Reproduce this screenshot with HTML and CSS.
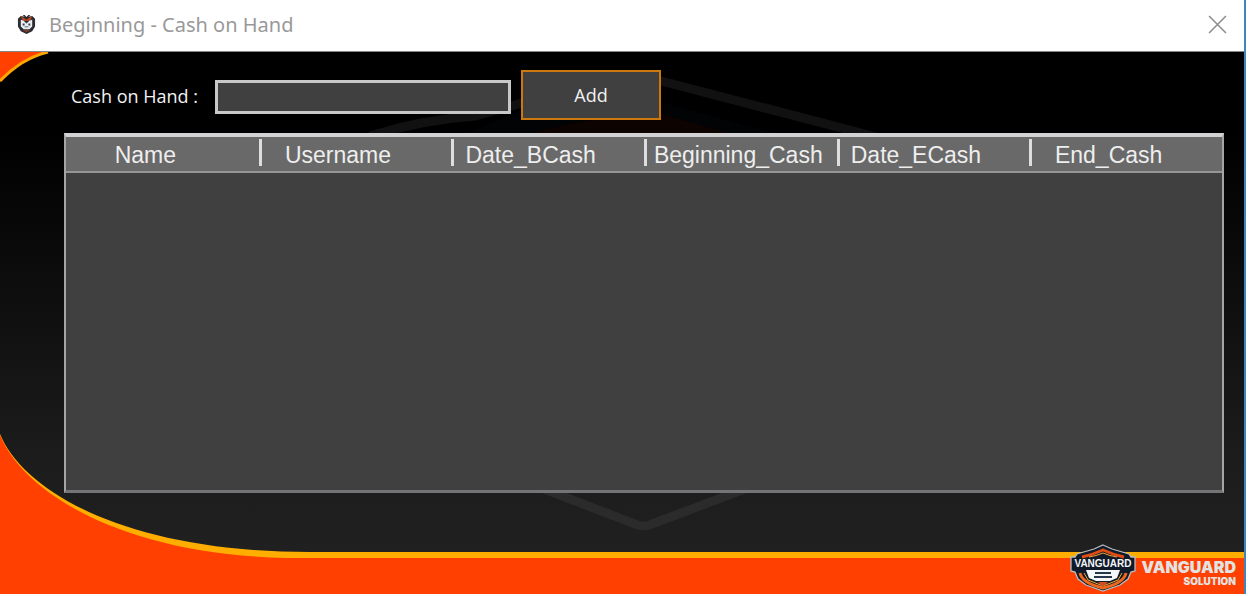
FILE: index.html
```html
<!DOCTYPE html>
<html lang="en">
<head>
<meta charset="utf-8">
<title>Beginning - Cash on Hand</title>
<link rel="stylesheet" href="styles.css">
</head>
<body>
<div class="window">
  <header class="titlebar">
    <svg class="app-icon" viewBox="0 0 20 20" aria-hidden="true">
      <path d="M1 4 4 1l6 1 6-1 3 3v8l-3 5-6 3-6-3-3-5z" fill="#2c2c33"/>
      <path d="m4 1 6 4 6-4-2 5H6z" fill="#c8481c"/>
      <path d="m6 0 4 4 4-4z" fill="#26262c"/>
      <path d="m8 0 2 2 2-2z" fill="#fff"/>
      <path d="m4 5 3 1 3 3 3-3 3-1v7l-3 3H7l-3-3z" fill="#e9edf4"/>
      <path d="M6 9h2v2H6zm6 0h2v2h-2zM8 12h4v1H8z" fill="#3c3c44"/>
      <path d="m6 16 4 2 4-2z" fill="#a43a20"/>
    </svg>
    <h1 class="title">Beginning - Cash on Hand</h1>
    <button class="close" type="button" aria-label="Close">
      <svg viewBox="0 0 18 18" aria-hidden="true"><path d="m1 1 16 16M17 1 1 17" fill="none" stroke="#8d8f8f" stroke-width="1.5"/></svg>
    </button>
  </header>
  <main class="content">
    <svg class="backdrop" viewBox="0 0 1244 542" preserveAspectRatio="none" aria-hidden="true">
      <path d="M400 110 540 50H660L880 110V300L643 440 400 300z" fill="#020305"/>
      <path d="M520 84Q600 62 660 62L740 84z" fill="#0d0300"/>
      <path d="M370 84Q420 68 475 64L540 46M650 26 665 30 880 86" fill="none" stroke="#111" stroke-width="9"/>
      <path d="M500 420 635 472Q643 476 652 472L790 420" fill="none" stroke="#2b2b2b" stroke-width="9"/>
      <path d="M0 0H47Q22 6 0 30z" fill="#ff4000"/>
      <path d="M48 0Q22 6 0 29" fill="none" stroke="#ffa500" stroke-width="3"/>
      <path d="M0 382C24 440 127 500 310 500H1244V542H0z" fill="#ffae00"/>
      <path d="M0 383C24 442 127 506 300 506H1244V542H0z" fill="#ff4000"/>
    </svg>
    <form class="entry">
      <label class="entry-label" for="cash">Cash on Hand :</label>
      <input class="entry-input" id="cash" type="text">
      <button class="add" type="button">Add</button>
    </form>
    <div class="grid">
      <table class="records">
        <thead>
          <tr>
            <th scope="col">Name</th>
            <th scope="col">Username</th>
            <th scope="col">Date_BCash</th>
            <th scope="col" class="long">Beginning_Cash</th>
            <th scope="col">Date_ECash</th>
            <th scope="col">End_Cash</th>
          </tr>
        </thead>
      </table>
    </div>
    <footer class="brand">
      <svg class="shield" viewBox="0 0 66 48" role="img" aria-label="Vanguard shield">
        <path d="m33 1 9 4 17 5 2 3h4v14l-4 1-3 7-8 6-17 6-17-6-8-6-3-7-4-1V13h4l2-3 17-5z" fill="#101a29" stroke="#b7bcc4" stroke-width="1.3"/>
        <path d="M12 13q10-2 21-7 11 5 21 7" fill="none" stroke="#df4c14" stroke-width="3"/>
        <path d="M19 13q7-1 14-4 7 3 14 4" fill="none" stroke="#f1a13b" stroke-width="1"/>
        <path d="M10 29q2 10 23 15 21-5 23-15" fill="none" stroke="#ee671c" stroke-width="3"/>
        <path d="m14 29 4 7 15 6 15-6 4-7" fill="none" stroke="#f1ad36" stroke-width="1"/>
        <path d="M16 26h34l-3 8-7 3H26l-7-3z" fill="#f4f6f8"/>
        <path d="M25 28h16v2H25zm-1 4h18v2H24z" fill="#26374c"/>
        <path d="m28 38 5 5 5-5z" fill="#d64b22"/>
        <text class="shield-text" x="33" y="23" text-anchor="middle">VANGUARD</text>
      </svg>
      <div class="wordmark"><span class="brand-name">VANGUARD</span><span class="brand-sub">SOLUTION</span></div>
    </footer>
  </main>
</div>
</body>
</html>
```
FILE: styles.css
```css
* { box-sizing: border-box; }

body {
  margin: 0;
  padding: 0 2px 2px 0;
  height: 100vh;
  background: #fff;
}

.window {
  display: flex;
  flex-direction: column;
  height: 100%;
  border-right: 2px solid #3f84bd;
}

.titlebar {
  display: flex;
  align-items: center;
  height: 52px;
  padding: 0 17px 2px;
  border-bottom: 1px solid #858585;
  background: #fff;
}

.app-icon {
  width: 19px;
  height: 19px;
  margin-right: 13px;
}

.title {
  flex: 1;
  margin: 0;
  font: 400 20px/28px "Noto Sans", sans-serif;
  color: #999;
}

.close {
  display: flex;
  padding: 0;
  border: 0;
  background: none;
}

.close svg {
  width: 19px;
  height: 19px;
}

.content {
  position: relative;
  display: flex;
  flex: 1;
  flex-direction: column;
  min-height: 0;
  padding: 18px 20px 0 64px;
  background: linear-gradient(#000 0, #000 15%, #1c1c1c 75%, #222 100%);
}

.backdrop {
  position: absolute;
  inset: 0;
  width: 100%;
  height: 100%;
}

.entry,
.grid,
.brand { position: relative; }

.entry {
  display: flex;
  align-items: center;
  height: 50px;
  padding-left: 7px;
}

.entry-label {
  width: 144px;
  padding-top: 2px;
  font: 400 18px/24px "Open Sans", sans-serif;
  color: #f2f2f2;
  white-space: nowrap;
}

.entry-input {
  width: 296px;
  height: 34px;
  margin-top: 4px;
  padding: 0 6px;
  border: 3px solid #c8c8c8;
  background: #404040;
  font: 400 18px/24px "Open Sans", sans-serif;
  color: #f2f2f2;
}

.add {
  width: 140px;
  height: 50px;
  margin-left: 10px;
  padding: 0;
  border: 2px solid #cc780c;
  background: #404040;
  font: 400 18px/24px "Open Sans", sans-serif;
  color: #f2f2f2;
}

.grid {
  flex: 1;
  margin-top: 13px;
  border: 2px solid #a5a5a7;
  border-top: 4px solid #d2d2d4;
  border-bottom: 3px solid #747477;
  background: #404040;
}

.records {
  width: 100%;
  table-layout: fixed;
  border-collapse: collapse;
}

.records th {
  height: 35px;
  padding: 2px 34px 0 0;
  border-bottom: 2px solid #969696;
  background: linear-gradient(#dedede, #dedede) left 2px / 3px 27px no-repeat #696969;
  font: 400 23px/26px "Liberation Sans", Arial, sans-serif;
  color: #eee;
}

.records th.long {
  padding-right: 4px;
}

.records th:first-child {
  background: #696969;
}

.brand {
  display: flex;
  align-items: flex-start;
  justify-content: flex-end;
  height: 101px;
  margin-right: -12px;
  padding-top: 51px;
}

.shield {
  width: 66px;
  height: 48px;
  margin-right: 5px;
}

.shield-text {
  font: 700 10px "Liberation Sans", sans-serif;
  fill: #f4f6f8;
}

.wordmark {
  display: flex;
  flex-direction: column;
  align-items: flex-end;
  padding-top: 15px;
  color: #e2e2e2;
}

.brand-name {
  font: 900 16px/16px Inter, sans-serif;
}

.brand-sub {
  font: 900 10px/12px Inter, sans-serif;
}
```
